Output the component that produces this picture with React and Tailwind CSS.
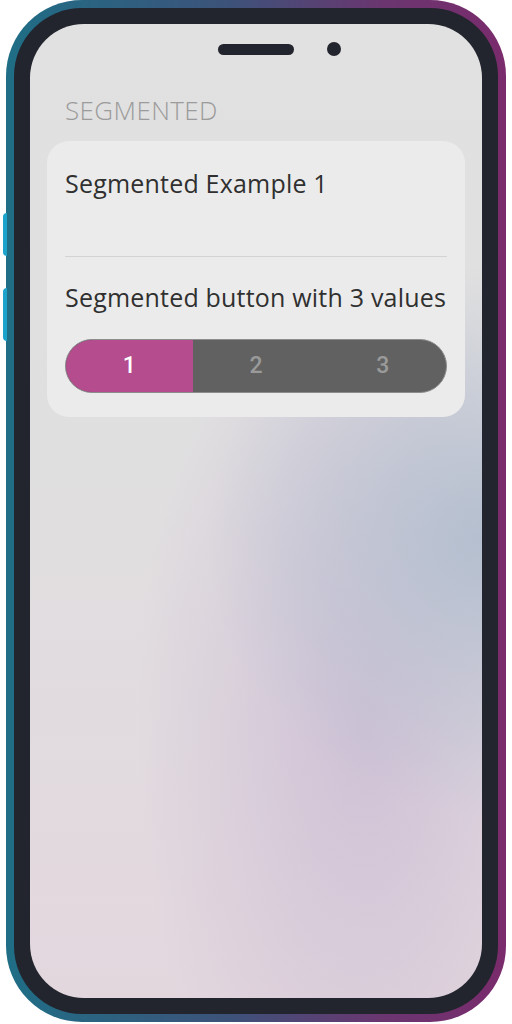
import React, { useState } from 'react';

const SEGMENTS = ['1', '2', '3'];

const App = () => {
  const [active, setActive] = useState(0);

  return (
    <div className="relative w-[512px] h-[1024px] bg-white">
      {/* side buttons */}
      <div className="absolute left-[3px] top-[213px] w-[4px] h-[43px] rounded-l-sm bg-[#1ba3cc]" />
      <div className="absolute left-[3px] top-[288px] w-[4px] h-[53px] rounded-l-sm bg-[#1ba3cc]" />

      <div className="ml-[6px] w-[500px] h-[1022px] rounded-[76px] p-[8px] bg-[linear-gradient(to_right,#1f6e86_0%,#3d5279_45%,#6a3670_75%,#7a2b6c_100%)]">
        <div className="w-full h-full rounded-[68px] p-[16px] bg-[#22252d]">
          <div
            className="w-full h-full rounded-[54px] overflow-hidden bg-[radial-gradient(circle_at_100%_53%,#b4bfcf_0%,rgba(180,191,207,0)_40%),radial-gradient(ellipse_at_74%_72%,#cfc1d6_0%,rgba(207,193,214,0)_48%),linear-gradient(to_bottom,#e1e1e1_0%,#e0dfe0_45%,#e3d7de_100%)]"
            style={{ fontFamily: '"Open Sans", "Noto Sans", sans-serif' }}
          >
            {/* notch */}
            <div className="grid grid-cols-[1fr_auto_1fr] items-center pt-[18px]">
              <div />
              <div className="w-[76px] h-[11px] rounded-full bg-[#22252d]" />
              <div className="flex items-center">
                <div className="ml-[33px] w-[14px] h-[14px] rounded-full bg-[#22252d]" />
              </div>
            </div>

            <div className="px-[17px] pt-[38px]">
              <h2 className="px-[18px] text-[26px] leading-[32px] font-light text-[#9b9b9b] tracking-[0.4px]">SEGMENTED</h2>

              <div className="mt-[15px] rounded-[22px] bg-[#ebebeb] px-[18px] pt-[27px] pb-[24px]">
                <p className="text-[25px] leading-[30px] text-[#303030] tracking-[0.2px]">Segmented Example 1</p>
                <div className="mt-[58px] h-px bg-[#d3d3d3]" />
                <p className="mt-[25px] text-[25px] leading-[30px] text-[#303030] tracking-[0.2px]">Segmented button with 3 values</p>

                <div className="mt-[27px] flex h-[54px] rounded-full overflow-hidden border border-[#8c8c8c] bg-[#616161]">
                  {SEGMENTS.map((s, i) => (
                    <button
                      key={s}
                      type="button"
                      onClick={() => setActive(i)}
                      className={`flex-1 flex items-center justify-center text-[23px] font-medium ${
                        active === i ? 'bg-[#b44c8e] text-white' : 'text-[#9a9a9a]'
                      }`}
                      style={{ fontFamily: 'Roboto, sans-serif' }}
                    >
                      {s}
                    </button>
                  ))}
                </div>
              </div>
            </div>
          </div>
        </div>
      </div>
    </div>
  );
};

export default App;
